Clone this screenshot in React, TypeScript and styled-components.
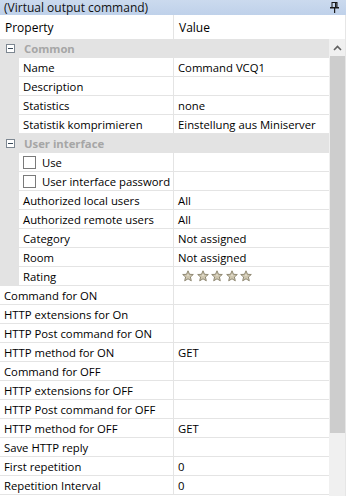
import React from "react";
import styled, { createGlobalStyle } from "styled-components";

const GlobalStyle = createGlobalStyle`
    html, body { margin: 0; padding: 0; background: #ffffff; }
    body { font-family: "Open Sans", "Noto Sans", Arial, sans-serif; font-size: 11.3px; color: #000; }
    * { box-sizing: border-box; }
`

type Item =
    | { kind: "group"; label: string }
    | { kind: "prop"; label: string; value?: string; indent?: boolean; check?: boolean; stars?: boolean };

const items: Item[] = [
    { kind: "group", label: "Common" },
    { kind: "prop", label: "Name", value: "Command VCQ1", indent: true },
    { kind: "prop", label: "Description", indent: true },
    { kind: "prop", label: "Statistics", value: "none", indent: true },
    { kind: "prop", label: "Statistik komprimieren", value: "Einstellung aus Miniserver", indent: true },
    { kind: "group", label: "User interface" },
    { kind: "prop", label: "Use", indent: true, check: true },
    { kind: "prop", label: "User interface password", indent: true, check: true },
    { kind: "prop", label: "Authorized local users", value: "All", indent: true },
    { kind: "prop", label: "Authorized remote users", value: "All", indent: true },
    { kind: "prop", label: "Category", value: "Not assigned", indent: true },
    { kind: "prop", label: "Room", value: "Not assigned", indent: true },
    { kind: "prop", label: "Rating", indent: true, stars: true },
    { kind: "prop", label: "Command for ON" },
    { kind: "prop", label: "HTTP extensions for On" },
    { kind: "prop", label: "HTTP Post command for ON" },
    { kind: "prop", label: "HTTP method for ON", value: "GET" },
    { kind: "prop", label: "Command for OFF" },
    { kind: "prop", label: "HTTP extensions for OFF" },
    { kind: "prop", label: "HTTP Post command for OFF" },
    { kind: "prop", label: "HTTP method for OFF", value: "GET" },
    { kind: "prop", label: "Save HTTP reply" },
    { kind: "prop", label: "First repetition", value: "0" },
    { kind: "prop", label: "Repetition Interval", value: "0" },
];

const Star = () => (
    <svg width="12" height="12" viewBox="0 0 12 12">
        <path d="M6 0.8 L7.5 4.3 L11.3 4.5 L8.4 7 L9.3 10.8 L6 8.8 L2.7 10.8 L3.6 7 L0.7 4.5 L4.5 4.3 Z"
              fill="#cfc7b0" stroke="#8f8872" strokeWidth="1" strokeLinejoin="round"/>
        <path d="M6 4 L6.8 5.8 L5.2 5.8 Z" fill="#ffffff" opacity="0.7"/>
    </svg>
)

const PinIcon = () => (
    <svg width="9" height="11" viewBox="0 0 9 11">
        <rect x="2" y="0.5" width="5" height="5" fill="none" stroke="#1a1a1a" strokeWidth="1"/>
        <rect x="5" y="1" width="1.5" height="4.5" fill="#1a1a1a"/>
        <rect x="0" y="5" width="9" height="1.5" fill="#1a1a1a"/>
        <rect x="4" y="6" width="1.2" height="5" fill="#1a1a1a"/>
    </svg>
)

const App = () => {
    return (
        <Panel>
            <GlobalStyle />
            <TitleBar>
                <span>(Virtual output command)</span>
                <PinIcon />
            </TitleBar>
            <Header>
                <HeaderCell>Property</HeaderCell>
                <HeaderCell $value>Value</HeaderCell>
            </Header>
            <Body>
                <Grid>
                    {items.map((it, i) => it.kind === "group" ? (
                        <GroupRow key={i}>
                            <MinusBox />
                            <GroupLabel>{it.label}</GroupLabel>
                        </GroupRow>
                    ) : (
                        <Row key={i}>
                            {it.indent && <Gutter />}
                            <NameCell $indent={!!it.indent}>
                                {it.check && <CheckBox />}
                                {it.label}
                            </NameCell>
                            <ValueCell>
                                {it.stars ? (
                                    <Stars>{[0, 1, 2, 3, 4].map(s => <Star key={s} />)}</Stars>
                                ) : it.value}
                            </ValueCell>
                        </Row>
                    ))}
                </Grid>
                <ScrollBar>
                    <ArrowButton>
                        <svg width="9" height="6" viewBox="0 0 9 6">
                            <path d="M1 5 L4.5 1.5 L8 5" fill="none" stroke="#606060" strokeWidth="1.6"/>
                        </svg>
                    </ArrowButton>
                    <Thumb />
                    <Track />
                </ScrollBar>
            </Body>
        </Panel>
    )
}

const Panel = styled.div`
    width: 346px;
    height: 496px;
    display: flex;
    flex-direction: column;
    overflow: hidden;
    background: #fff;
`

const TitleBar = styled.div`
    height: 15px;
    flex: none;
    display: flex;
    align-items: center;
    justify-content: space-between;
    padding: 0 7px 1px 4px;
    background: linear-gradient(#cbdaee, #bfd1ea);
    color: #111;
    font-size: 12px;
`

const Header = styled.div`
    height: 24px;
    flex: none;
    display: flex;
    background: #fff;
    border-right: 1px solid #e6e6e6;
    font-size: 12px;
`

const HeaderCell = styled.div<{ $value?: boolean }>`
    width: ${p => p.$value ? "auto" : "173px"};
    flex: ${p => p.$value ? "1" : "none"};
    display: flex;
    align-items: center;
    padding-left: 5px;
    border-left: ${p => p.$value ? "1px solid #e4e4e4" : "none"};
`

const Body = styled.div`
    flex: 1;
    display: flex;
    min-height: 0;
`

const Grid = styled.div`
    flex: 1;
    display: flex;
    flex-direction: column;
`

const GroupRow = styled.div`
    height: 19px;
    flex: none;
    display: flex;
    align-items: center;
    background: #e3e3e3;
`

const MinusBox = styled.div`
    width: 9px;
    height: 9px;
    margin: 0 9px 0 6px;
    border: 1px solid #7d8791;
    background: #fff;
    position: relative;
    &::after {
        content: "";
        position: absolute;
        left: 1px;
        top: 3px;
        width: 5px;
        height: 1px;
        background: #3a4a5a;
    }
`

const GroupLabel = styled.span`
    font-weight: bold;
    color: #a6a6a6;
`

const Row = styled.div`
    height: 19px;
    flex: none;
    display: flex;
`

const Gutter = styled.div`
    width: 19px;
    flex: none;
    background: #e3e3e3;
`

const NameCell = styled.div<{ $indent: boolean }>`
    width: ${p => p.$indent ? "154px" : "173px"};
    flex: none;
    display: flex;
    align-items: center;
    padding-left: 4px;
    border-bottom: 1px solid #e4e4e4;
    white-space: nowrap;
`

const CheckBox = styled.span`
    width: 13px;
    height: 13px;
    flex: none;
    border: 1px solid #7a7a7a;
    background: #fff;
    margin-right: 6px;
`

const ValueCell = styled.div`
    flex: 1;
    display: flex;
    align-items: center;
    padding-left: 4px;
    border-left: 1px solid #e4e4e4;
    border-bottom: 1px solid #e4e4e4;
    white-space: nowrap;
`

const Stars = styled.div`
    display: flex;
    gap: 2.5px;
    padding-left: 4px;
`

const ScrollBar = styled.div`
    width: 17px;
    flex: none;
    display: flex;
    flex-direction: column;
    background: #f0f0f0;
    border-left: 1px solid #f0f0f0;
    border-right: 1px solid #e6e6e6;
`

const ArrowButton = styled.div`
    height: 17px;
    display: flex;
    align-items: center;
    justify-content: center;
`

const Thumb = styled.div`
    height: 377px;
    background: #cdcdcd;
`

const Track = styled.div`
    flex: 1;
`

export default App;
